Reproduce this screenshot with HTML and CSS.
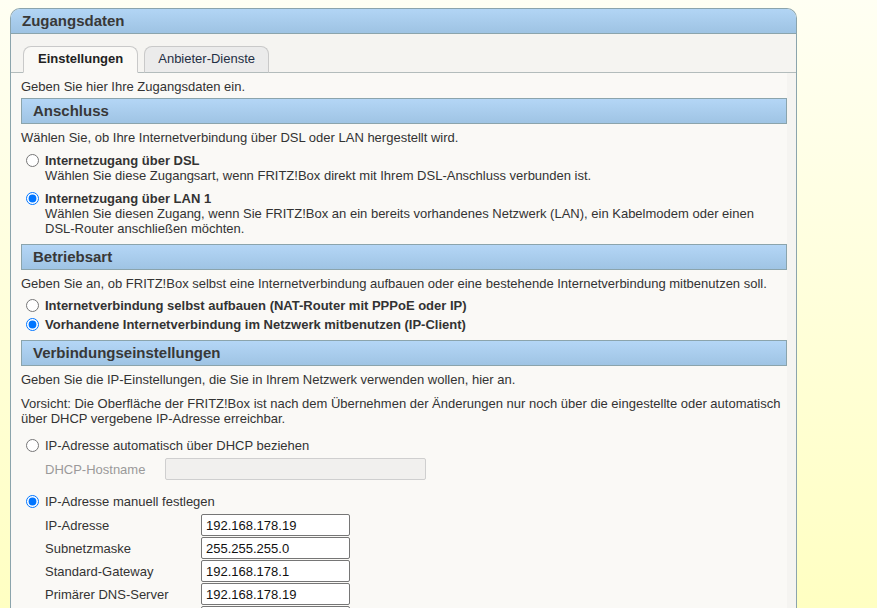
FILE: index.html
```html
<!DOCTYPE html>
<html lang="de">
<head>
<meta charset="utf-8">
<title>Zugangsdaten</title>
<link rel="stylesheet" href="styles.css">
</head>
<body>
<div class="box">
  <div class="box-head">Zugangsdaten</div>
  <div class="tabs">
    <span class="tab tab-active">Einstellungen</span>
    <span class="tab">Anbieter-Dienste</span>
  </div>
  <div class="content">
    <p class="text intro">Geben Sie hier Ihre Zugangsdaten ein.</p>

    <div class="sec sec-first">Anschluss</div>
    <p class="text after-sec">Wählen Sie, ob Ihre Internetverbindung über DSL oder LAN hergestellt wird.</p>
    <label class="opt opt-wide">
      <input type="radio" name="anschluss">
      <span class="opt-body"><b>Internetzugang über DSL</b><span class="desc">Wählen Sie diese Zugangsart, wenn FRITZ!Box direkt mit Ihrem DSL-Anschluss verbunden ist.</span></span>
    </label>
    <label class="opt opt-wide">
      <input type="radio" name="anschluss" checked>
      <span class="opt-body"><b>Internetzugang über LAN 1</b><span class="desc">Wählen Sie diesen Zugang, wenn Sie FRITZ!Box an ein bereits vorhandenes Netzwerk (LAN), ein Kabelmodem oder einen DSL-Router anschließen möchten.</span></span>
    </label>

    <div class="sec">Betriebsart</div>
    <p class="text after-sec">Geben Sie an, ob FRITZ!Box selbst eine Internetverbindung aufbauen oder eine bestehende Internetverbindung mitbenutzen soll.</p>
    <label class="opt opt-first">
      <input type="radio" name="betrieb">
      <span class="opt-body"><b>Internetverbindung selbst aufbauen (NAT-Router mit PPPoE oder IP)</b></span>
    </label>
    <label class="opt opt-tight">
      <input type="radio" name="betrieb" checked>
      <span class="opt-body"><b>Vorhandene Internetverbindung im Netzwerk mitbenutzen (IP-Client)</b></span>
    </label>

    <div class="sec">Verbindungseinstellungen</div>
    <p class="text after-sec">Geben Sie die IP-Einstellungen, die Sie in Ihrem Netzwerk verwenden wollen, hier an.</p>
    <p class="text warn">Vorsicht: Die Oberfläche der FRITZ!Box ist nach dem Übernehmen der Änderungen nur noch über die eingestellte oder automatisch über DHCP vergebene IP-Adresse erreichbar.</p>

    <label class="opt opt-dhcp">
      <input type="radio" name="ip">
      <span class="opt-body">IP-Adresse automatisch über DHCP beziehen</span>
    </label>
    <div class="field field-host">
      <span class="field-label muted">DHCP-Hostname</span>
      <input class="inp inp-host" type="text" disabled>
    </div>

    <label class="opt opt-manual">
      <input type="radio" name="ip" checked>
      <span class="opt-body">IP-Adresse manuell festlegen</span>
    </label>
    <div class="fields">
      <div class="field"><span class="field-label">IP-Adresse</span><input class="inp" type="text" value="192.168.178.19"></div>
      <div class="field"><span class="field-label">Subnetzmaske</span><input class="inp" type="text" value="255.255.255.0"></div>
      <div class="field"><span class="field-label">Standard-Gateway</span><input class="inp" type="text" value="192.168.178.1"></div>
      <div class="field"><span class="field-label">Primärer DNS-Server</span><input class="inp" type="text" value="192.168.178.19"></div>
      <div class="field"><span class="field-label"></span><input class="inp" type="text" aria-label="Sekundärer DNS-Server"></div>
    </div>
  </div>
</div>
</body>
</html>
```

FILE: styles.css
```css
html, body {
  margin: 0;
  height: 100%;
}

body {
  padding: 8px 0 0 10px;
  box-sizing: border-box;
  background: linear-gradient(#fffff3, #ffffc2);
  font-family: "Liberation Sans", Arial, sans-serif;
  font-size: 13px;
  color: #333;
  overflow: hidden;
}

.box {
  width: 787px;
  height: 640px;
  box-sizing: border-box;
  border: 1px solid #8ba4ac;
  border-bottom: none;
  border-radius: 10px 10px 0 0;
  background: #f5f4f1;
  overflow: hidden;
}

.box-head {
  height: 24px;
  line-height: 24px;
  padding-left: 11px;
  font-size: 15px;
  font-weight: bold;
  color: #383838;
  background: linear-gradient(#b2d5f5, #9ec3e3);
  border-bottom: 1px solid #8ba4ac;
}

.tabs {
  display: flex;
  gap: 6px;
  padding: 12px 0 0 12px;
  border-bottom: 1px solid #b3bcbc;
}

.tab {
  box-sizing: border-box;
  height: 27px;
  line-height: 24px;
  margin-bottom: -1px;
  padding: 0 13px;
  border: 1px solid #c9c9c9;
  border-bottom: 1px solid #b3bcbc;
  border-radius: 8px 8px 0 0;
  background: #ebebeb;
  color: #1f2f44;
}

.tab-active {
  padding: 0 14px;
  font-weight: bold;
  color: #222;
  background: #faf9f6;
  border-bottom-color: #faf9f6;
}

.content {
  margin-right: 9px;
  padding: 6px 0 20px 10px;
  background: #faf9f6;
  min-height: 600px;
}

.text {
  margin: 0;
  line-height: 15px;
}

.sec {
  box-sizing: border-box;
  height: 26px;
  line-height: 24px;
  margin-top: 8px;
  padding-left: 11px;
  font-size: 15px;
  font-weight: bold;
  color: #383838;
  background: linear-gradient(#b4d6f6, #9fc4e4);
  border: 1px solid #8ba4ac;
}

.sec-first {
  margin-top: 4px;
}

.after-sec {
  margin-top: 6px;
}

.warn {
  margin-top: 9px;
}

.opt {
  display: flex;
  align-items: flex-start;
  line-height: 15px;
}

.opt input {
  width: 13px;
  height: 13px;
  margin: 1px 6px 0 5px;
  flex: none;
}

.opt-body {
  display: flex;
  flex-direction: column;
}

.opt-wide {
  margin-top: 8px;
}

.opt-first {
  margin-top: 7px;
}

.opt-tight {
  margin-top: 4px;
}

.opt-dhcp {
  margin-top: 12px;
}

.opt-manual {
  margin-top: 14px;
}

.field {
  display: flex;
  align-items: center;
  height: 22px;
  padding-left: 24px;
}

.field + .field {
  margin-top: 1px;
}

.field-host {
  margin-top: 5px;
}

.fields {
  margin-top: 5px;
}

.field-label {
  width: 156px;
  flex: none;
}

.field-host .field-label {
  width: 120px;
}

.muted {
  color: #9a9a9a;
}

.inp {
  box-sizing: border-box;
  width: 149px;
  height: 22px;
  margin: 0;
  padding: 0 4px;
  border: 1px solid #767676;
  border-radius: 2px;
  background: #fff;
  font-family: "Liberation Sans", Arial, sans-serif;
  font-size: 13px;
  color: #111;
}

.inp-host {
  width: 261px;
  border-color: #cfcfcf;
  background: #f1f0ee;
}
```
